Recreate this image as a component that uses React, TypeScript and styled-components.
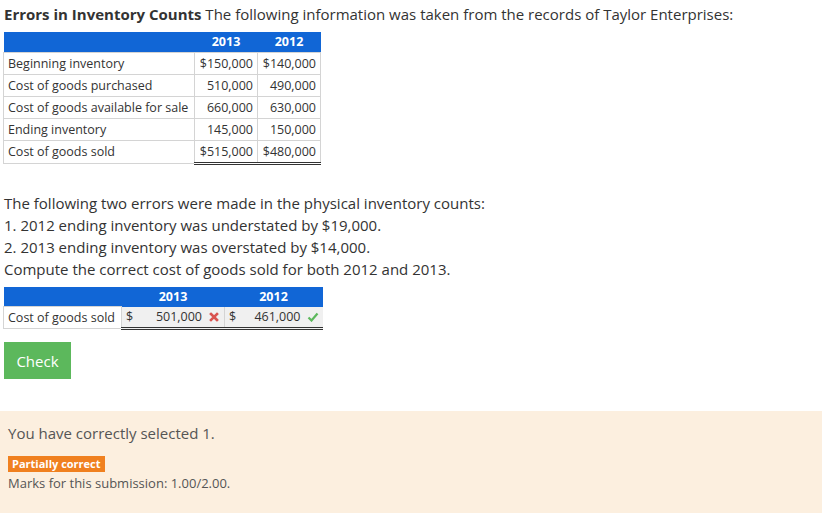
import React from "react";
import styled, { createGlobalStyle } from "styled-components";

const Global = createGlobalStyle`
  html, body { margin: 0; padding: 0; background: #fff; }
  body { font-family: "Open Sans", "Noto Sans", sans-serif; color: #333; }
`;

const Page = styled.div`
  display: flex;
  flex-direction: column;
  width: 822px;
`;

const Content = styled.div`
  padding: 3px 0 0 3px;
  display: flex;
  flex-direction: column;
  align-items: flex-start;
`;

const Title = styled.div`
  font-size: 15px;
  line-height: 22px;
  padding-left: 1px;
  margin-bottom: 7px;
  color: #333;
  b { font-weight: 700; }
`;

const Table = styled.table`
  border-collapse: collapse;
  table-layout: fixed;
  font-size: 12.5px;
  color: #333;
`;

const HeadCell = styled.th<{ $w?: number }>`
  background: #1166d6;
  color: #fff;
  font-weight: 700;
  height: 20px;
  padding: 0 6px;
  text-align: center;
  width: ${(p) => (p.$w ? `${p.$w}px` : "auto")};
  box-sizing: border-box;
`;

const LabelCell = styled.td`
  border: 1px solid #d4d4d4;
  padding: 0 4px;
  height: 21px;
  white-space: nowrap;
`;

const NumCell = styled.td<{ $top?: boolean; $double?: boolean }>`
  border: 1px solid #d4d4d4;
  border-top: ${(p) => (p.$top ? "1px solid #222" : "1px solid #d4d4d4")};
  border-bottom: ${(p) => (p.$double ? "3px double #333" : "1px solid #d4d4d4")};
  padding: 0 4px;
  height: 21px;
  text-align: right;
  white-space: nowrap;
`;

const Para = styled.div`
  margin-top: 27px;
  font-size: 15px;
  line-height: 22px;
  padding-left: 1px;
  color: #333;
`;

const AnsTable = styled(Table)`
  margin-top: 7px;
`;

const AnsCell = styled.td`
  height: 21px;
  box-sizing: border-box;
  background: #f0f0f0;
  border-left: 1px solid #d4d4d4;
  border-bottom: 3px double #333;
  padding: 0 4px;
`;

const AnsInner = styled.div`
  display: flex;
  align-items: center;
  gap: 6px;
`;

const Dollar = styled.span`
  flex: 0 0 auto;
`;

const AnsValue = styled.span`
  flex: 1;
  text-align: right;
`;

const Mark = styled.span`
  display: inline-flex;
  width: 12px;
  justify-content: center;
`;

const CheckBtn = styled.button`
  margin-top: 12px;
  margin-left: 1px;
  width: 67px;
  height: 37px;
  background: #5cb85c;
  color: #fff;
  border: none;
  font-family: "Open Sans", sans-serif;
  font-size: 15px;
  padding: 0;
`;

const Feedback = styled.div`
  margin-top: 32px;
  background: #fcefdf;
  height: 102px;
  padding: 11px 8px 0 8px;
  box-sizing: border-box;
  display: flex;
  flex-direction: column;
  align-items: flex-start;
`;

const FbText = styled.div`
  font-size: 15px;
  line-height: 22px;
  color: #555;
`;

const Badge = styled.span`
  margin-top: 12px;
  background: #f0801f;
  color: #fff;
  font-weight: 700;
  font-size: 11px;
  line-height: 16px;
  padding: 0 4px;
`;

const Marks = styled.div`
  font-size: 13px;
  line-height: 22px;
  color: #555;
`;

const XIcon = () => (
  <svg width="10" height="10" viewBox="0 0 10 10">
    <path d="M2 2 L8 8 M8 2 L2 8" stroke="#d9534f" strokeWidth="2.6" strokeLinecap="square" />
  </svg>
);

const CheckIcon = () => (
  <svg width="12" height="10" viewBox="0 0 12 10">
    <path d="M1.5 5.5 L4.5 8.5 L10.5 1.5" stroke="#5cb85c" strokeWidth="2.2" fill="none" />
  </svg>
);

const rows: { label: string; a: string; b: string; top?: boolean; dbl?: boolean }[] = [
  { label: "Beginning inventory", a: "$150,000", b: "$140,000" },
  { label: "Cost of goods purchased", a: "510,000", b: "490,000" },
  { label: "Cost of goods available for sale", a: "660,000", b: "630,000", top: true },
  { label: "Ending inventory", a: "145,000", b: "150,000" },
  { label: "Cost of goods sold", a: "$515,000", b: "$480,000", top: true, dbl: true },
];

export default function App() {
  return (
    <Page>
      <Global />
      <Content>
        <Title>
          <b>Errors in Inventory Counts</b> The following information was taken from the records of Taylor Enterprises:
        </Title>
        <Table>
          <thead>
            <tr>
              <HeadCell $w={191} />
              <HeadCell $w={63}>2013</HeadCell>
              <HeadCell $w={63}>2012</HeadCell>
            </tr>
          </thead>
          <tbody>
            {rows.map((r) => (
              <tr key={r.label}>
                <LabelCell>{r.label}</LabelCell>
                <NumCell $top={r.top} $double={r.dbl}>{r.a}</NumCell>
                <NumCell $top={r.top} $double={r.dbl}>{r.b}</NumCell>
              </tr>
            ))}
          </tbody>
        </Table>
        <Para>
          The following two errors were made in the physical inventory counts:
          <br />
          1. 2012 ending inventory was understated by $19,000.
          <br />
          2. 2013 ending inventory was overstated by $14,000.
          <br />
          Compute the correct cost of goods sold for both 2012 and 2013.
        </Para>
        <AnsTable>
          <thead>
            <tr>
              <HeadCell $w={118} />
              <HeadCell $w={103}>2013</HeadCell>
              <HeadCell $w={98}>2012</HeadCell>
            </tr>
          </thead>
          <tbody>
            <tr>
              <LabelCell>Cost of goods sold</LabelCell>
              <AnsCell>
                <AnsInner>
                  <Dollar>$</Dollar>
                  <AnsValue>501,000</AnsValue>
                  <Mark><XIcon /></Mark>
                </AnsInner>
              </AnsCell>
              <AnsCell>
                <AnsInner>
                  <Dollar>$</Dollar>
                  <AnsValue>461,000</AnsValue>
                  <Mark><CheckIcon /></Mark>
                </AnsInner>
              </AnsCell>
            </tr>
          </tbody>
        </AnsTable>
        <CheckBtn>Check</CheckBtn>
      </Content>
      <Feedback>
        <FbText>You have correctly selected 1.</FbText>
        <Badge>Partially correct</Badge>
        <Marks>Marks for this submission: 1.00/2.00.</Marks>
      </Feedback>
    </Page>
  );
}
